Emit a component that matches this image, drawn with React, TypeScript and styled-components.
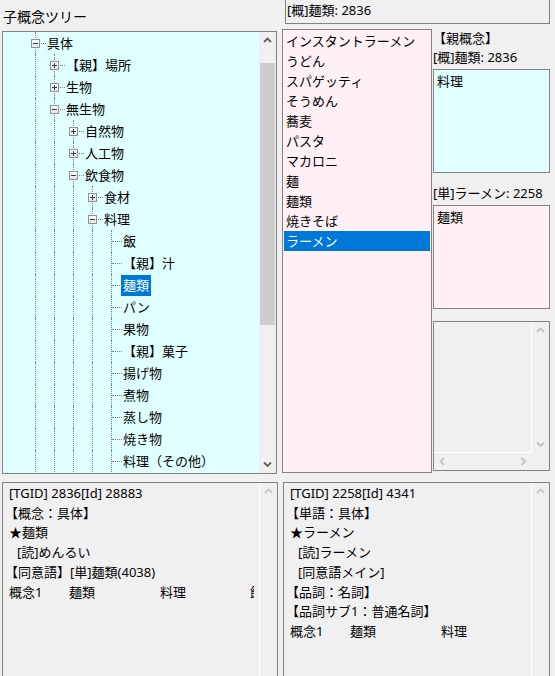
import React from "react";
import styled, { createGlobalStyle, css } from "styled-components";

const BORDER = "#828282";
const DOT = "#808080";

const GlobalStyle = createGlobalStyle`
  html, body {
    margin: 0;
    padding: 0;
    background: #f0f0f0;
  }
  body {
    font-family: "Noto Sans", "Noto Sans CJK JP", sans-serif;
    font-size: 13px;
    color: #000;
  }
`;

const Page = styled.div`
  width: 555px;
  height: 676px;
  overflow: hidden;
  background: #f0f0f0;
  display: flex;
  flex-direction: column;
`;

const TopArea = styled.div`
  display: flex;
  height: 482px;
  flex-shrink: 0;
`;

const LeftCol = styled.div`
  width: 282px;
  padding-left: 2px;
  box-sizing: border-box;
  flex-shrink: 0;
`;

const Title = styled.div`
  height: 31px;
  padding: 7px 0 0 1px;
  box-sizing: border-box;
  font-size: 14px;
  line-height: 20px;
  white-space: nowrap;
`;

const TreeBox = styled.div`
  width: 275px;
  height: 443px;
  box-sizing: border-box;
  border: 1px solid ${BORDER};
  background: #e0ffff;
  display: flex;
  overflow: hidden;
`;

const TreeBody = styled.div`
  flex: 1;
  min-width: 0;
  padding-left: 24px;
  overflow: hidden;
`;

const Row = styled.div`
  display: flex;
  align-items: center;
  height: 22px;
`;

const Guide = styled.span<{ $branch?: boolean }>`
  position: relative;
  width: 19px;
  flex-shrink: 0;
  align-self: stretch;
  &::before {
    content: "";
    position: absolute;
    left: 8px;
    top: 0;
    bottom: 0;
    border-left: 1px dotted ${DOT};
  }
  ${(p) =>
    p.$branch &&
    css`
      &::after {
        content: "";
        position: absolute;
        left: 9px;
        right: 0;
        top: 11px;
        border-top: 1px dotted ${DOT};
      }
    `}
`;

const Expander = styled.span`
  position: absolute;
  left: 4px;
  top: 7px;
  width: 9px;
  height: 9px;
  box-sizing: border-box;
  border: 1px solid #919191;
  background: linear-gradient(#ffffff, #e2e2e2);
  z-index: 1;
  display: flex;
  align-items: center;
  justify-content: center;
`;

const NodeLabel = styled.span<{ $selected?: boolean }>`
  margin-left: -1px;
  padding: 0 2px;
  height: 21px;
  line-height: 21px;
  white-space: nowrap;
  background: ${(p) => (p.$selected ? "#0078d7" : "transparent")};
  color: ${(p) => (p.$selected ? "#fff" : "#000")};
`;

const VScroll = styled.div<{ $edge?: boolean }>`
  width: 17px;
  flex-shrink: 0;
  background: #f0f0f0;
  display: flex;
  flex-direction: column;
  ${(p) => p.$edge && "border-left: 1px solid #ffffff;"}
`;

const ArrowButton = styled.div`
  height: 17px;
  width: 17px;
  flex-shrink: 0;
  display: flex;
  align-items: center;
  justify-content: center;
`;

const Track = styled.div`
  flex: 1;
  display: flex;
  flex-direction: column;
`;

const Thumb = styled.div<{ $offset: number; $size: number }>`
  margin: ${(p) => p.$offset}px 1px 0;
  height: ${(p) => p.$size}px;
  background: #cdcdcd;
`;

const RightCol = styled.div`
  flex: 1;
  display: flex;
  flex-direction: column;
  min-width: 0;
`;

const TopBox = styled.div`
  margin: -1px 0 0 3px;
  width: 265px;
  height: 25px;
  box-sizing: border-box;
  border: 1px solid ${BORDER};
  padding-left: 1px;
  line-height: 21px;
  white-space: nowrap;
`;

const MainRow = styled.div`
  display: flex;
  margin-top: 5px;
`;

const ListBox = styled.div`
  width: 150px;
  height: 444px;
  box-sizing: border-box;
  border: 1px solid ${BORDER};
  background: #fff0f5;
  padding: 1px;
  overflow: hidden;
`;

const ListItem = styled.div<{ $selected?: boolean }>`
  height: 20px;
  line-height: 20px;
  padding-left: 2px;
  white-space: nowrap;
  overflow: hidden;
  background: ${(p) => (p.$selected ? "#0078d7" : "transparent")};
  color: ${(p) => (p.$selected ? "#fff" : "#000")};
`;

const Side = styled.div`
  width: 117px;
  margin-left: 1px;
  display: flex;
  flex-direction: column;
`;

const SideLabel = styled.div<{ $h: number; $gap?: number }>`
  height: ${(p) => p.$h}px;
  line-height: ${(p) => p.$h}px;
  margin-top: ${(p) => p.$gap ?? 0}px;
  white-space: nowrap;
`;

const ValueBox = styled.div<{ $bg: string; $gap: number }>`
  margin-top: ${(p) => p.$gap}px;
  height: 104px;
  box-sizing: border-box;
  border: 1px solid ${BORDER};
  background: ${(p) => p.$bg};
  padding: 1px 3px 0;
  line-height: 20px;
  overflow: hidden;
`;

const ScrollBox = styled.div`
  margin-top: 12px;
  height: 150px;
  box-sizing: border-box;
  border: 1px solid ${BORDER};
  display: grid;
  grid-template-columns: 1fr 17px;
  grid-template-rows: 1fr 17px;
`;

const Viewport = styled.div`
  border-right: 1px solid #ffffff;
  border-bottom: 1px solid #ffffff;
`;

const HScroll = styled.div`
  display: flex;
  justify-content: space-between;
`;

const BottomArea = styled.div`
  display: flex;
  gap: 5px;
  padding-left: 2px;
`;

const InfoPanel = styled.div<{ $w: number }>`
  width: ${(p) => p.$w}px;
  height: 200px;
  box-sizing: border-box;
  border: 1px solid ${BORDER};
  border-bottom: none;
  background: #f0f0f0;
  display: flex;
  flex-shrink: 0;
`;

const InfoText = styled.div`
  flex: 1;
  min-width: 0;
  overflow: hidden;
  padding: 1px 0 0 6px;
  line-height: 19.7px;
`;

const InfoLine = styled.div<{ $indent?: boolean; $bracket?: boolean }>`
  white-space: nowrap;
  margin-left: ${(p) => (p.$indent ? 8 : p.$bracket ? -4 : 0)}px;
`;

const TabRow = styled.div`
  display: flex;
  white-space: nowrap;
`;

const TabCell = styled.span<{ $w: number }>`
  width: ${(p) => p.$w}px;
  flex-shrink: 0;
`;

const HiddenTail = styled.span`
  display: inline-block;
  width: 4px;
  overflow: hidden;
  vertical-align: top;
`;

type Dir = "up" | "down" | "left" | "right";

function Chevron({ dir, color }: { dir: Dir; color: string }) {
  const vertical = dir === "up" || dir === "down";
  const points = {
    up: "1,5 4.5,1.5 8,5",
    down: "1,1.5 4.5,5 8,1.5",
    left: "5,1 1.5,4.5 5,8",
    right: "1.5,1 5,4.5 1.5,8",
  }[dir];
  return (
    <svg
      width={vertical ? 9 : 7}
      height={vertical ? 7 : 9}
      viewBox={vertical ? "0 0 9 7" : "0 0 7 9"}
    >
      <polyline points={points} fill="none" stroke={color} strokeWidth="1.8" />
    </svg>
  );
}

function PlusMinus({ open }: { open: boolean }) {
  return (
    <svg width="5" height="5" viewBox="0 0 5 5">
      <rect x="0" y="2" width="5" height="1" fill="#2e3b5c" />
      {!open && <rect x="2" y="0" width="1" height="5" fill="#2e3b5c" />}
    </svg>
  );
}

interface TreeNode {
  label: string;
  level: number;
  exp?: "+" | "-";
  selected?: boolean;
}

const treeNodes: TreeNode[] = [
  { label: "具体", level: 0, exp: "-" },
  { label: "【親】場所", level: 1, exp: "+" },
  { label: "生物", level: 1, exp: "+" },
  { label: "無生物", level: 1, exp: "-" },
  { label: "自然物", level: 2, exp: "+" },
  { label: "人工物", level: 2, exp: "+" },
  { label: "飲食物", level: 2, exp: "-" },
  { label: "食材", level: 3, exp: "+" },
  { label: "料理", level: 3, exp: "-" },
  { label: "飯", level: 4 },
  { label: "【親】汁", level: 4 },
  { label: "麺類", level: 4, selected: true },
  { label: "パン", level: 4 },
  { label: "果物", level: 4 },
  { label: "【親】菓子", level: 4 },
  { label: "揚げ物", level: 4 },
  { label: "煮物", level: 4 },
  { label: "蒸し物", level: 4 },
  { label: "焼き物", level: 4 },
  { label: "料理（その他）", level: 4 },
];

const words = [
  "インスタントラーメン",
  "うどん",
  "スパゲッティ",
  "そうめん",
  "蕎麦",
  "パスタ",
  "マカロニ",
  "麺",
  "麺類",
  "焼きそば",
  "ラーメン",
];

function TreeRow({ node }: { node: TreeNode }) {
  const guides = [];
  for (let i = 0; i < node.level; i++) guides.push(<Guide key={i} />);
  return (
    <Row>
      {guides}
      <Guide $branch>
        {node.exp && (
          <Expander>
            <PlusMinus open={node.exp === "-"} />
          </Expander>
        )}
      </Guide>
      <NodeLabel $selected={node.selected}>{node.label}</NodeLabel>
    </Row>
  );
}

function ConceptRow({ tail }: { tail?: boolean }) {
  return (
    <TabRow>
      <TabCell $w={60}>概念1</TabCell>
      <TabCell $w={91}>麺類</TabCell>
      <TabCell $w={90}>料理</TabCell>
      {tail && <HiddenTail>飲</HiddenTail>}
    </TabRow>
  );
}

export default function App() {
  return (
    <Page>
      <GlobalStyle />
      <TopArea>
        <LeftCol>
          <Title>子概念ツリー</Title>
          <TreeBox>
            <TreeBody>
              {treeNodes.map((n, i) => (
                <TreeRow key={i} node={n} />
              ))}
            </TreeBody>
            <VScroll>
              <ArrowButton>
                <Chevron dir="up" color="#606060" />
              </ArrowButton>
              <Track>
                <Thumb $offset={14} $size={262} />
              </Track>
              <ArrowButton>
                <Chevron dir="down" color="#606060" />
              </ArrowButton>
            </VScroll>
          </TreeBox>
        </LeftCol>
        <RightCol>
          <TopBox>[概]麺類: 2836</TopBox>
          <MainRow>
            <ListBox>
              {words.map((w) => (
                <ListItem key={w} $selected={w === "ラーメン"}>
                  {w}
                </ListItem>
              ))}
            </ListBox>
            <Side>
              <SideLabel $h={19}>【親概念】</SideLabel>
              <SideLabel $h={19}>[概]麺類: 2836</SideLabel>
              <ValueBox $bg="#e0ffff" $gap={2}>
                料理
              </ValueBox>
              <SideLabel $h={20} $gap={10}>
                [単]ラーメン: 2258
              </SideLabel>
              <ValueBox $bg="#fff0f5" $gap={2}>
                麺類
              </ValueBox>
              <ScrollBox>
                <Viewport />
                <VScroll>
                  <ArrowButton>
                    <Chevron dir="up" color="#c2c2c2" />
                  </ArrowButton>
                  <Track />
                  <ArrowButton>
                    <Chevron dir="down" color="#c2c2c2" />
                  </ArrowButton>
                </VScroll>
                <HScroll>
                  <ArrowButton>
                    <Chevron dir="left" color="#c2c2c2" />
                  </ArrowButton>
                  <ArrowButton>
                    <Chevron dir="right" color="#c2c2c2" />
                  </ArrowButton>
                </HScroll>
                <div />
              </ScrollBox>
            </Side>
          </MainRow>
        </RightCol>
      </TopArea>
      <BottomArea>
        <InfoPanel $w={276}>
          <InfoText>
            <InfoLine>[TGID] 2836[Id] 28883</InfoLine>
            <InfoLine $bracket>【概念：具体】</InfoLine>
            <InfoLine>★麺類</InfoLine>
            <InfoLine $indent>[読]めんるい</InfoLine>
            <InfoLine $bracket>【同意語】[単]麺類(4038)</InfoLine>
            <ConceptRow tail />
          </InfoText>
          <VScroll $edge>
            <ArrowButton>
              <Chevron dir="up" color="#c8c8c8" />
            </ArrowButton>
          </VScroll>
        </InfoPanel>
        <InfoPanel $w={267}>
          <InfoText>
            <InfoLine>[TGID] 2258[Id] 4341</InfoLine>
            <InfoLine $bracket>【単語：具体】</InfoLine>
            <InfoLine>★ラーメン</InfoLine>
            <InfoLine $indent>[読]ラーメン</InfoLine>
            <InfoLine $indent>[同意語メイン]</InfoLine>
            <InfoLine $bracket>【品詞：名詞】</InfoLine>
            <InfoLine $bracket>【品詞サブ1：普通名詞】</InfoLine>
            <ConceptRow />
          </InfoText>
          <VScroll $edge>
            <ArrowButton>
              <Chevron dir="up" color="#c8c8c8" />
            </ArrowButton>
          </VScroll>
        </InfoPanel>
      </BottomArea>
    </Page>
  );
}
